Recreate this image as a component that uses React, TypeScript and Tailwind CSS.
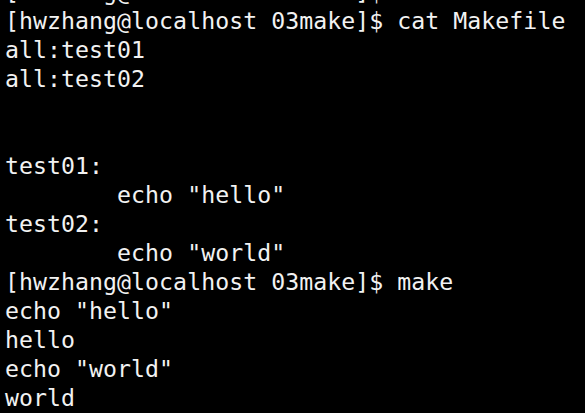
const lines = [
  "[hwzhang@localhost 03make]$ vi Makefile",
  "[hwzhang@localhost 03make]$ cat Makefile",
  "all:test01",
  "all:test02",
  "",
  "",
  "test01:",
  "        echo \"hello\"",
  "test02:",
  "        echo \"world\"",
  "[hwzhang@localhost 03make]$ make",
  "echo \"hello\"",
  "hello",
  "echo \"world\"",
  "world",
];

export default function App() {
  return (
    <div className="h-[413px] w-[585px] overflow-hidden bg-black">
      <pre className="-mt-[23px] pl-[5px] font-['DejaVu_Sans_Mono',monospace] text-[23.2px] leading-[29px] tracking-[0.05px] text-[#f2f2f2]">
        {lines.map((line, i) => (
          <div key={i} className="h-[29px] whitespace-pre">
            {line}
          </div>
        ))}
      </pre>
    </div>
  );
}
